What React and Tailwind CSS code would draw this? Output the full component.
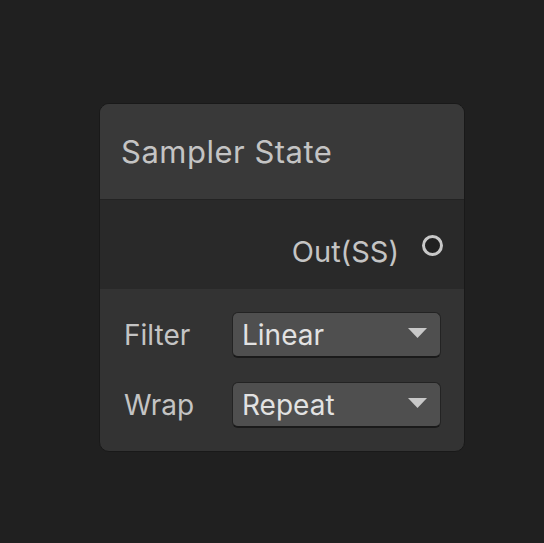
import React from "react";

function Dropdown({ value }) {
  return (
    <div className="flex h-[46px] w-[209px] items-center justify-between rounded-[6px] border border-[#232323] border-b-2 border-b-[#1a1a1a] bg-[#4f4f4f] pl-[9px] pr-[13px]">
      <span className="text-[28px] leading-none text-[#e2e2e2]">{value}</span>
      <svg width="19" height="10" viewBox="0 0 19 10" className="mb-[3px]">
        <path d="M0 0 H19 L9.5 10 Z" fill="#c8c8c8" />
      </svg>
    </div>
  );
}

export default function App() {
  const settings = [
    { label: "Filter", value: "Linear" },
    { label: "Wrap", value: "Repeat" },
  ];

  return (
    <div
      className="h-[543px] w-[544px] bg-[#202020] pl-[99px] pt-[103px]"
      style={{ fontFamily: "Inter, 'Noto Sans', sans-serif" }}
    >
      <div className="w-[366px] overflow-hidden rounded-[10px] border border-[#191919] bg-[#333333]">
        {/* header */}
        <div className="flex h-[95px] items-center bg-[#393939] pl-[21px]">
          <span className="text-[31px] leading-none tracking-[0.5px] text-[#c4c4c4]">Sampler State</span>
        </div>
        <div className="h-px bg-[#232323]" />

        {/* ports */}
        <div className="flex h-[89px] items-start justify-end gap-[23px] bg-[#292929] pr-[21px]">
          <span className="mt-[37px] text-[29px] leading-none text-[#c4c4c4]">Out(SS)</span>
          <span className="mt-[35px] h-[21px] w-[21px] rounded-full border-[3px] border-[#c8c8c8] bg-[#212121]" />
        </div>

        {/* settings */}
        <div className="flex flex-col gap-[24px] pb-[23px] pl-[24px] pr-[22px] pt-[23px]">
          {settings.map((s) => (
            <div key={s.label} className="flex items-center">
              <span className="w-[108px] text-[28px] leading-none text-[#c4c4c4]">{s.label}</span>
              <Dropdown value={s.value} />
            </div>
          ))}
        </div>
      </div>
    </div>
  );
}
